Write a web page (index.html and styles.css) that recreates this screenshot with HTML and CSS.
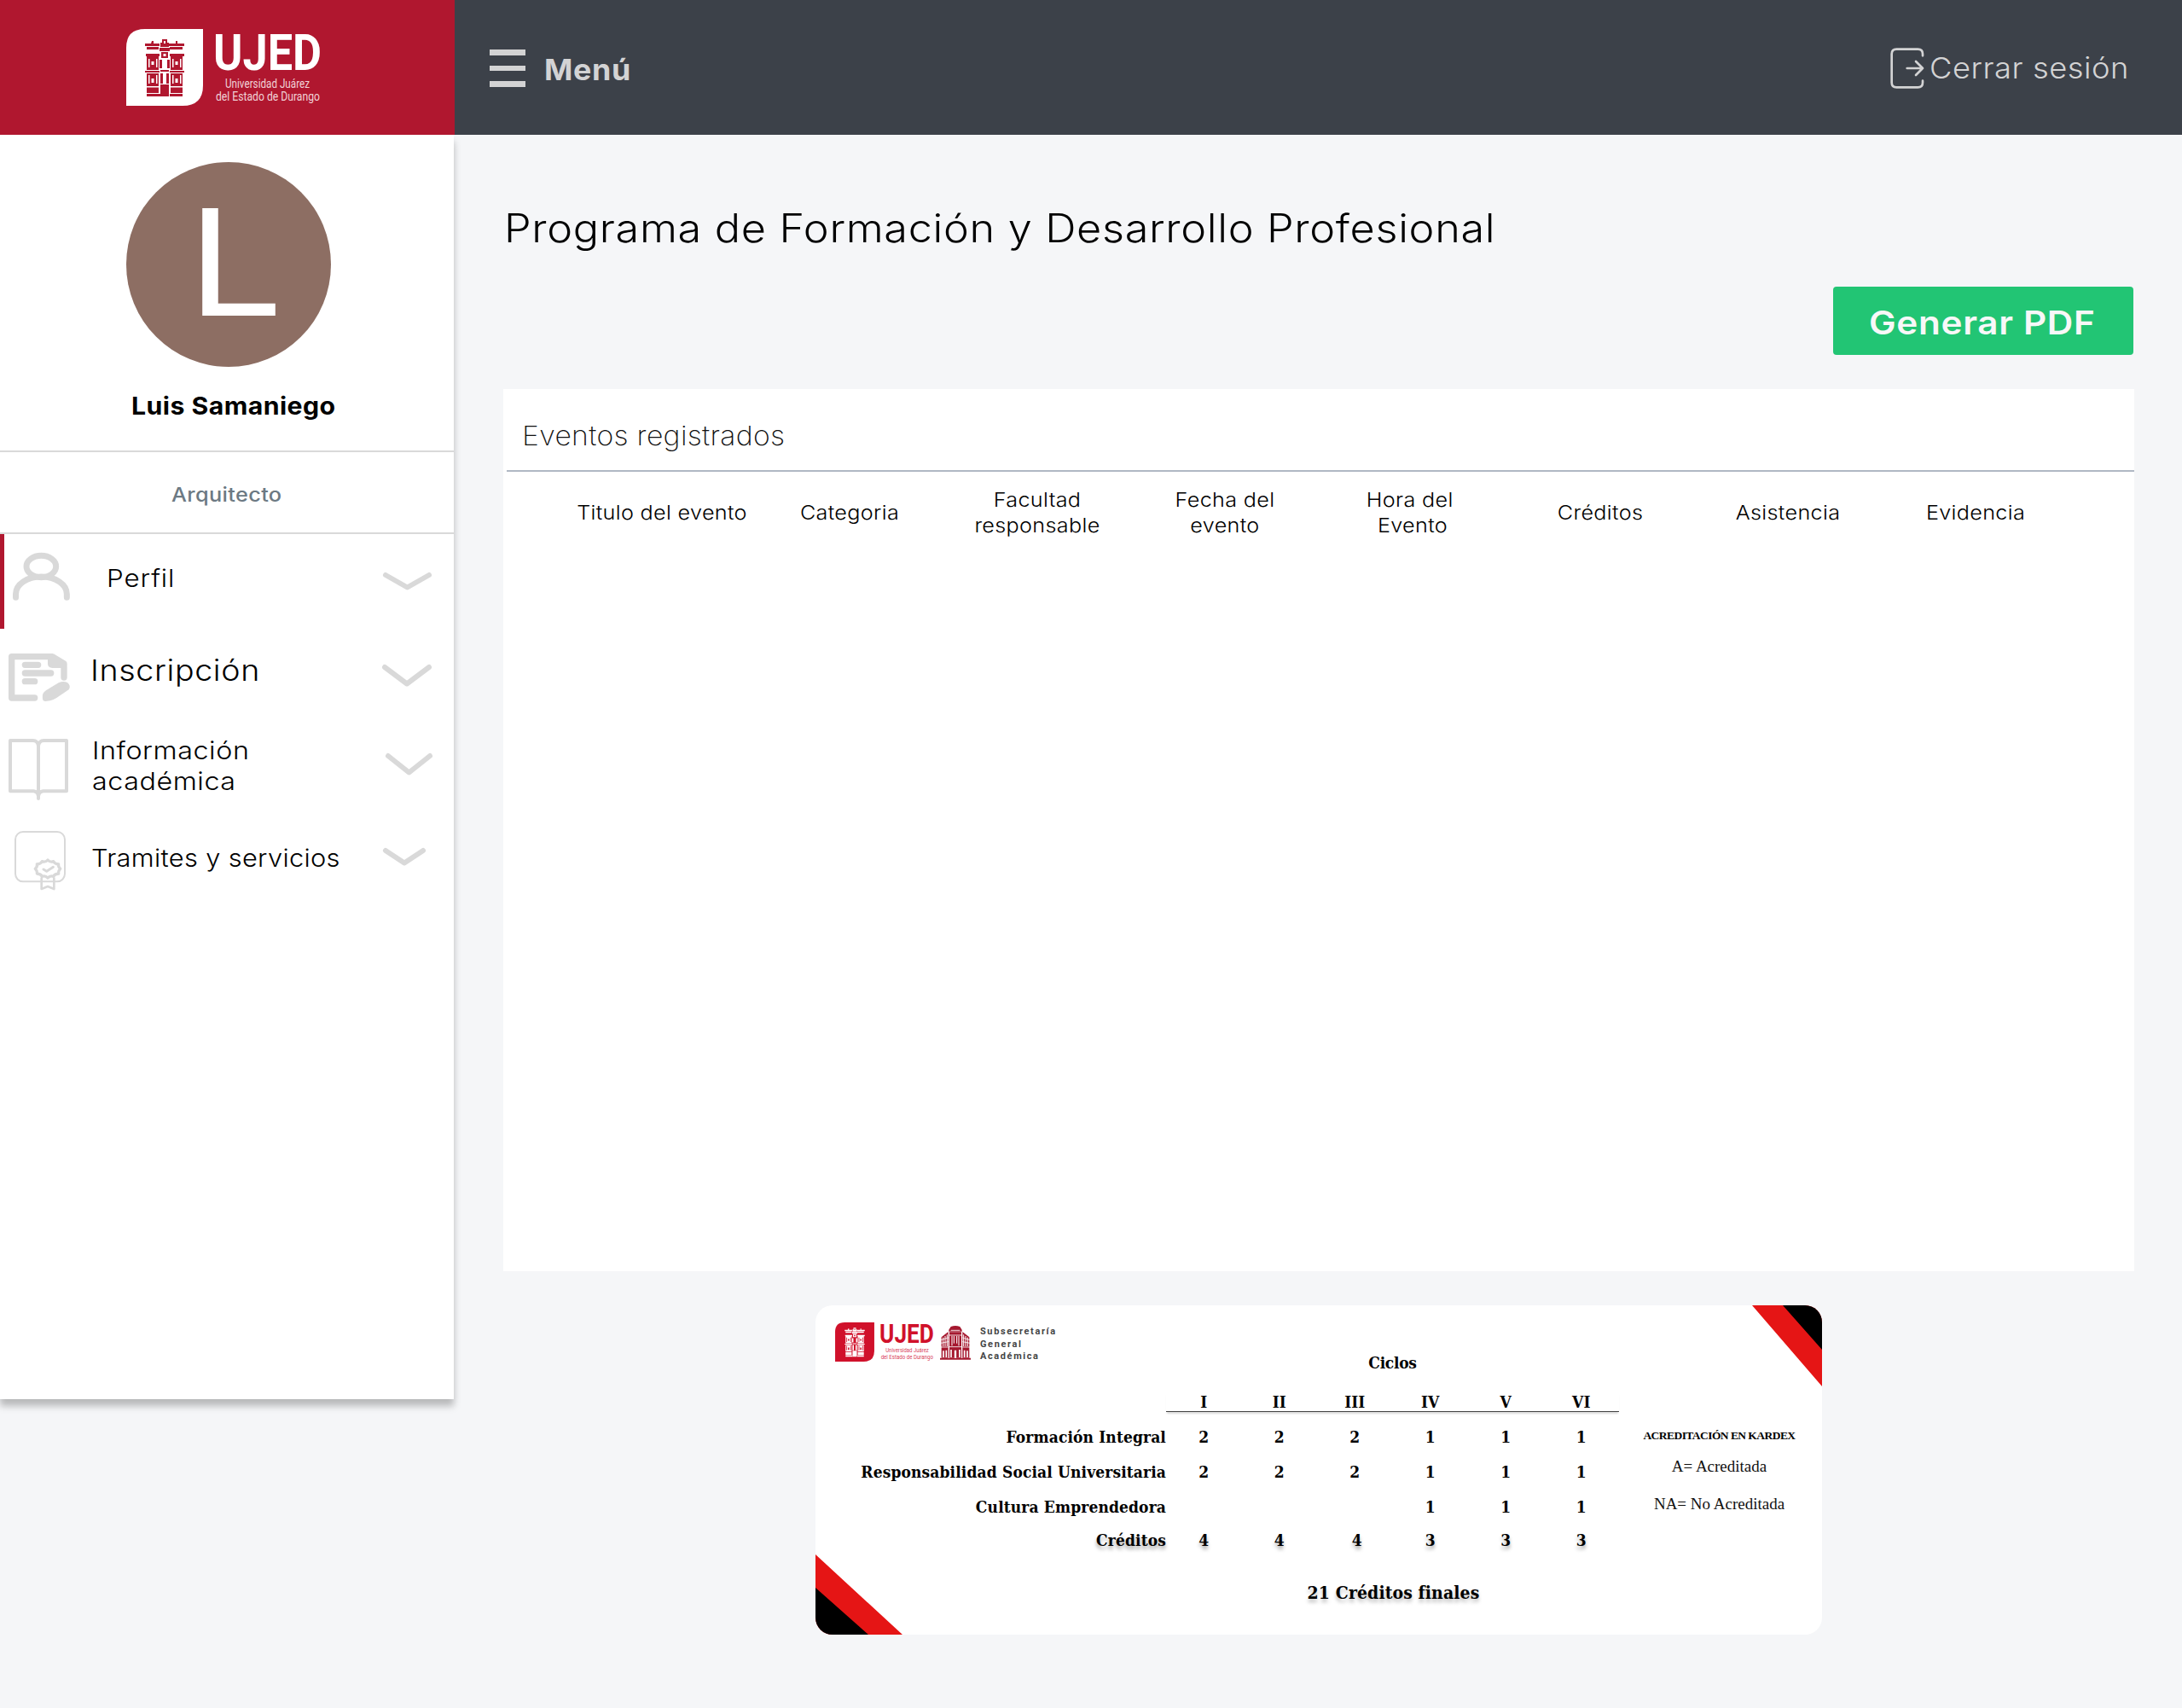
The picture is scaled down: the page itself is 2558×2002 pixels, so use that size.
FILE: index.html
```html
<!DOCTYPE html>
<html lang="es">
<head>
<meta charset="utf-8">
<title>UJED - Programa de Formación y Desarrollo Profesional</title>
<link rel="stylesheet" href="styles.css">
</head>
<body>
<svg class="sprite" aria-hidden="true">
  <symbol id="badge" viewBox="0 0 90 90">
    <path class="logo-badge" d="M22 0H90V66Q90 90 66 90H0V22Q0 0 22 0Z"/>
    <g class="logo-tower">
      <path d="M30 14h2v3h7v3H22v-3h7z M24 21h14v3H24z M23 29h16v3H23z M24 32h14v16H24z M22 49h17v2H22z M24 52h14v23H24z M24 76h16v3H24z"/>
      <path d="M58 14h2v3h8v3H50v-3h8z M51 21h15v3H51z M51 29h17v3H51z M52 32h14v16H52z M51 49h17v2H51z M52 52h14v23H52z M51 76h15v3H51z"/>
      <path d="M42 12h6v4h2v5H40v-5h2z M39 22h12v4H39z M41 27h8v7h-8z M39 36h3v10h-3z M48 36h3v10h-3z M40 48h10v2H40z M40 52h3v12h-3z M47 52h3v12h-3z M40 65h10v14H40z"/>
    </g>
    <path class="logo-badge" d="M26 35h1.500v10h-1.500z M35 35h1.500v10h-1.500z M29.500 38h3v4h-3z M54 35h1.500v10h-1.500z M63 35h1.500v10h-1.500z M57.500 38h3v4h-3z M26 54h1.500v10h-1.500z M35 54h1.500v10h-1.500z M29.500 58h3v5h-3z M54 54h1.500v10h-1.500z M63 54h1.500v10h-1.500z M57.500 58h3v5h-3z M23 67h16v1.500H23z M51 67h16v1.500H51z M44 14h2v3h-2z M43.500 29h3v3h-3z"/>
  </symbol>
</svg>

<header class="topbar">
  <div class="brand">
    <svg class="brand-logo" width="232" height="94" viewBox="0 0 232 94">
      <use href="#badge" width="90" height="90"/>
      <text class="logo-name" x="102" y="48" textLength="127" lengthAdjust="spacingAndGlyphs">UJED</text>
      <text class="logo-sub" x="116" y="68.500" textLength="99" lengthAdjust="spacingAndGlyphs">Universidad Juárez</text>
      <text class="logo-sub" x="105" y="84" textLength="122" lengthAdjust="spacingAndGlyphs">del Estado de Durango</text>
    </svg>
  </div>
  <div class="toolbar">
    <button class="menu-toggle">
      <span class="bars"><i></i><i></i><i></i></span>
      <span class="menu-label">Menú</span>
    </button>
    <a class="logout">
      <svg width="40" height="48" viewBox="0 0 120 144" fill="none" stroke="currentColor" stroke-width="8" stroke-linecap="round" stroke-linejoin="round">
        <path d="M114 28V22Q114 5 97 5H22Q5 5 5 22V122Q5 139 22 139H97Q114 139 114 122V116"/>
        <path d="M59 72H114M90 48L114 72L90 96"/>
      </svg>
      <span class="logout-label">Cerrar sesión</span>
    </a>
  </div>
</header>

<div class="layout">
  <aside class="sidebar">
    <section class="profile">
      <div class="avatar"><span>L</span></div>
      <p class="user-name"><span>Luis Samaniego</span></p>
    </section>
    <p class="user-role"><span>Arquitecto</span></p>
    <nav>
      <a class="nav-item is-active">
        <svg class="nav-icon" width="67" height="56" viewBox="45 55 201 168" fill="none" stroke="currentColor" stroke-width="21" stroke-linecap="round">
          <ellipse cx="145" cy="103" rx="52" ry="38"/>
          <path d="M55.500 212V200C55.500 165 95 139 145 139S235 165 235 200V212"/>
        </svg>
        <span class="nav-label">Perfil</span>
        <svg class="chevron" width="57" height="21" viewBox="0 0 57 21"><path d="M3 3L28.500 17.500L54 3"/></svg>
      </a>
      <a class="nav-item enroll">
        <svg class="nav-icon" width="72" height="56" viewBox="30 48 216 168" fill="currentColor">
          <path fill="none" stroke="currentColor" stroke-width="22" stroke-linecap="round" stroke-linejoin="round" d="M122 204H41V59H184L225 84V132"/>
          <path d="M168 60L184 52L232 82V99H184Q168 98 168 84Z"/>
          <path fill="none" stroke="currentColor" stroke-width="22" stroke-linecap="round" d="M88 88H134M88 117H179M88 146H122"/>
          <path d="M150 208C148 190 152 184 164 176L206 151Q222 143 237 150Q251 162 242 175L200 203Q186 212 176 214L160 216Q151 216 150 208Z"/>
        </svg>
        <span class="nav-label">Inscripción</span>
        <svg class="chevron" width="58" height="26" viewBox="0 0 58 26"><path d="M3 3L29 22.500L55 3"/></svg>
      </a>
      <a class="nav-item academic">
        <svg class="nav-icon" width="70" height="72" viewBox="30 348 210 216" fill="none" stroke="currentColor" stroke-width="12" stroke-linecap="round" stroke-linejoin="round">
          <path d="M135 558V372Q132 354 116 354H36V532H118Q133 534 135 550Q137 534 152 532H234V354H154Q138 354 135 372"/>
        </svg>
        <span class="nav-label">Información<br>académica</span>
        <svg class="chevron" width="55" height="26" viewBox="0 0 55 26"><path d="M3 3L27.500 22.500L52 3"/></svg>
      </a>
      <a class="nav-item services">
        <svg class="nav-icon" width="60" height="70" viewBox="51 671 180 210" fill="none" stroke="currentColor" stroke-linecap="round" stroke-linejoin="round">
          <rect x="54" y="674" width="174" height="175" rx="27" stroke-width="6"/>
          <path stroke-width="8" d="M146 837V875L168 866L190 875V837"/>
          <path stroke-width="10" d="M168 773Q176 782 188 778Q192 787 206 788Q204 797 212 804Q204 812 206 821Q192 822 188 831Q176 827 168 836Q160 827 148 831Q144 822 130 821Q132 812 124 804Q132 797 130 788Q144 787 148 778Q160 782 168 773Z"/>
          <path stroke-width="9" d="M153 806L164 813L187 798"/>
        </svg>
        <span class="nav-label">Tramites y servicios</span>
        <svg class="chevron" width="50" height="21" viewBox="0 0 50 21"><path d="M3 3L25 17.500L47 3"/></svg>
      </a>
    </nav>
  </aside>

  <main class="content">
    <h1>Programa de Formación y Desarrollo Profesional</h1>
    <button class="pdf-button"><span>Generar PDF</span></button>

    <section class="events">
      <h2>Eventos registrados</h2>
      <div class="events-head">
        <span>Titulo del evento</span>
        <span>Categoria</span>
        <span>Facultad<br>responsable</span>
        <span>Fecha del<br>evento</span>
        <span><span class="nudge">Hora del</span><br>Evento</span>
        <span>Créditos</span>
        <span>Asistencia</span>
        <span>Evidencia</span>
      </div>
    </section>

    <section class="credits">
      <svg class="ribbon" width="1180" height="386" viewBox="0 0 1180 386">
        <path fill="#e51515" d="M0 292L102 386H0Z M1098 0H1180V95Z"/>
        <path d="M0 331L62 386H0Z M1134 0H1180V52Z"/>
      </svg>
      <div class="areas">
        <div class="logos">
          <svg class="red-logo" width="118" height="48" viewBox="0 0 231 94">
            <use href="#badge" width="90" height="90"/>
            <text class="logo-name" x="102" y="47" textLength="125" lengthAdjust="spacingAndGlyphs">UJED</text>
            <text class="logo-sub" x="116" y="68.500" textLength="99" lengthAdjust="spacingAndGlyphs">Universidad Juárez</text>
            <text class="logo-sub" x="105" y="84" textLength="120" lengthAdjust="spacingAndGlyphs">del Estado de Durango</text>
          </svg>
          <svg class="building" width="36" height="40" viewBox="0 0 108 120" fill="#a5182f">
            <path d="M38 3Q54-3 70 3L77 14V20H31V14Z M0 113H108V119H0Z"/>
            <path d="M5 40L29 21V113H5Z M103 40L79 21V113H103Z M33 22H75V113H33Z"/>
            <g stroke="#fff" fill="none">
              <path stroke-width="3" d="M11 41V72M18 36V72M25 31V72M97 41V72M90 36V72M83 31V72M42 36V70M66 36V70M49 36V62M59 36V62"/>
              <path stroke-width="2.500" d="M3 50L29 42M3 61L29 56M3 75H29M105 50L79 42M105 61L79 56M105 75H79M33 33H75M33 74H75M38 16H70"/>
              <path stroke-width="5" d="M12 111V88M22 111V86M96 111V88M86 111V86M39 111V84M69 111V84"/>
              <path stroke-width="7" d="M54 113V86"/>
            </g>
          </svg>
          <p class="office">Subsecretaría<br>General<br>Académica</p>
        </div>
        <ul class="area-list">
          <li>Formación Integral</li>
          <li>Responsabilidad Social Universitaria</li>
          <li>Cultura Emprendedora</li>
          <li class="total">Créditos</li>
        </ul>
      </div>
      <div class="cycles">
        <p class="cycles-title">Ciclos</p>
        <div class="cycle-row cycle-head"><span>I</span><span>II</span><span>III</span><span>IV</span><span>V</span><span>VI</span></div>
        <div class="cycle-row"><span>2</span><span>2</span><span>2</span><span>1</span><span>1</span><span>1</span></div>
        <div class="cycle-row"><span>2</span><span>2</span><span>2</span><span>1</span><span>1</span><span>1</span></div>
        <div class="cycle-row"><span></span><span></span><span></span><span>1</span><span>1</span><span>1</span></div>
        <div class="cycle-row total"><span>4</span><span>4</span><span class="shifted">4</span><span>3</span><span>3</span><span>3</span></div>
        <p class="grand-total">21 Créditos finales</p>
      </div>
      <div class="legend">
        <p class="legend-title">ACREDITACIÓN EN KARDEX</p>
        <p>A= Acreditada</p>
        <p class="legend-na">NA= No Acreditada</p>
      </div>
    </section>
  </main>
</div>
</body>
</html>
```
FILE: styles.css
```css
* { box-sizing: border-box; }

body {
  margin: 0;
  min-height: 2002px;
  background: #f5f6f8;
  color: #000;
  font-family: Inter, "Liberation Sans", sans-serif;
}

h1, h2, p, ul { margin: 0; padding: 0; }
ul { list-style: none; }
button { border: 0; background: none; padding: 0; font-family: inherit; }
svg { display: block; flex: none; overflow: visible; }
.sprite { position: absolute; width: 0; height: 0; }

/* Logo */
.brand-logo { --badge: #fff; --tower: #b0172f; --name: #fff; --sub: #f0d3d8; }
.red-logo { --badge: #d0112b; --tower: #fff; --name: #d0112b; --sub: #d9415a; }
.logo-badge { fill: var(--badge); }
.logo-tower { fill: var(--tower); }
.logo-name { fill: var(--name); font: 700 60px Roboto, sans-serif; }
.logo-sub { fill: var(--sub); font: 400 14px Roboto, sans-serif; }

/* Top bar */
.topbar { display: grid; grid-template-columns: 533px 1fr; height: 158px; }
.brand { background: #b0172f; padding: 34px 0 0 148px; }
.toolbar { display: flex; align-items: center; background: #3c4149; color: #d3d3d4; padding: 2px 0 0 41px; }
.menu-toggle { display: flex; align-items: center; gap: 22px; color: inherit; }
.bars { display: flex; flex-direction: column; gap: 12px; width: 42px; }
.bars i { height: 6.67px; background: currentColor; }
.menu-label { font-size: 34px; font-weight: 700; line-height: 40px; letter-spacing: .6px; padding-top: 4px; transform: scaleX(1.055); transform-origin: left; }
.logout { display: flex; align-items: center; gap: 6px; width: 342px; margin-left: auto; font-size: 34px; font-weight: 300; line-height: 48px; letter-spacing: .5px; }
.logout-label { transform: scaleX(1.068); transform-origin: left; }

.layout { display: grid; grid-template-columns: 532px 1fr; align-items: start; }

/* Sidebar */
.sidebar { height: 1482px; background: #fff; box-shadow: 0 8px 8px rgba(0, 0, 0, .25); clip-path: inset(0 -20px -30px 0); }
.profile { height: 372px; padding-top: 32px; border-bottom: 2px solid #d9d9d9; }
.avatar {
  display: flex; align-items: center; justify-content: center;
  width: 240px; height: 240px; margin-left: 148px; padding: 0 0 6px 15px;
  border-radius: 50%; background: #8d6e63; color: #fff; font-size: 173px; line-height: 1;
}
.avatar span { transform: scaleX(1.15); }
.user-name { margin-top: 26px; padding-left: 15px; text-align: center; font-size: 28.5px; font-weight: 700; line-height: 40px; letter-spacing: .4px; }
.user-name span { display: inline-block; transform: scaleX(1.062); }
.user-role { height: 96px; border-bottom: 2px solid #d9d9d9; padding-top: 6px; text-align: center; color: #6c7983; font-size: 23px; font-weight: 500; line-height: 89px; letter-spacing: .3px; }
.user-role span { display: inline-block; transform: scaleX(1.102); }

.nav-item { display: grid; grid-template-columns: 106px 1fr auto; align-items: start; height: 108px; }
.nav-icon { margin-left: 10px; color: #d9d9d9; }
.nav-label { font-size: 28px; font-weight: 300; line-height: 36px; white-space: nowrap; transform-origin: left; }
.chevron { fill: none; stroke: #d9d9d9; stroke-width: 6px; stroke-linecap: round; stroke-linejoin: round; margin-right: 26px; }

.is-active { grid-template-columns: 101px 1fr auto; height: 111px; border-left: 5px solid #b0172f; }
.is-active .nav-icon { margin-top: 22px; }
.is-active .nav-label { margin: 34px 0 0 19px; letter-spacing: .8px; transform: scaleX(1.12); }
.is-active .chevron { margin-top: 45px; }
.enroll .nav-icon { margin-top: 29px; }
.enroll .nav-label { margin-top: 29px; font-size: 34.5px; line-height: 40px; letter-spacing: .6px; transform: scaleX(1.089); }
.enroll .chevron { margin-top: 42px; }
.academic { height: 110px; }
.academic .nav-icon { margin-top: 21px; }
.academic .nav-label { margin: 17px 0 0 1.5px; font-size: 29px; letter-spacing: .5px; transform: scaleX(1.112); }
.academic .chevron { margin-top: 38px; margin-right: 25px; }
.services .nav-icon { margin: 19px 0 0 17px; }
.services .nav-label { margin: 33px 0 0 1px; letter-spacing: .3px; transform: scaleX(1.1); }
.services .chevron { margin: 39px 33px 0 0; }

/* Main column */
.content { padding: 79px 56px 0 58px; }
h1 { margin-left: 1px; font-size: 46px; font-weight: 300; line-height: 60px; letter-spacing: .6px; white-space: nowrap; transform: scaleX(1.096); transform-origin: left; }
.pdf-button {
  display: block; width: 352px; height: 80px; margin: 39px 1px 0 auto; padding-left: 42px;
  border-radius: 4px; background: #22c574; color: #f8f8f8; text-align: left; white-space: nowrap;
  font-size: 38.5px; font-weight: 600; line-height: 84px; letter-spacing: .6px;
}
.pdf-button span { display: inline-block; transform: scaleX(1.098); transform-origin: left; }

.events { height: 1034px; margin-top: 40px; background: #fff; }
.events h2 { height: 95px; padding: 14px 0 0 22px; font-size: 31.5px; font-weight: 200; line-height: 81px; letter-spacing: .3px; color: #111; transform: scaleX(1.07); transform-origin: 22px 0; }
.events-head {
  display: grid; grid-template-columns: repeat(8, 220px); align-items: center;
  margin-left: 4px; padding: 18px 0 0 72px; border-top: 2px solid #b0b8c4;
  text-align: center; font-size: 23px; font-weight: 300; line-height: 30px; letter-spacing: .3px;
}
.events-head > span { transform: scaleX(1.095); }
.nudge { margin-right: 6px; }

/* Credits card */
.credits {
  position: relative; display: grid; grid-template-columns: 411px 531px 238px;
  width: 1180px; height: 386px; margin: 40px 0 0 366px; overflow: hidden;
  border-radius: 20px; background: #fff;
  font: 700 19px/40px "DejaVu Serif Condensed", "DejaVu Serif", serif;
}
.ribbon { position: absolute; inset: 0; }
.logos { display: flex; height: 46px; margin: 20px 0 68px 23px; }
.building { margin: 4px 0 0 5px; }
.office { margin: 4px 0 0 11px; color: #444; font: 700 11px/14.6px Roboto, sans-serif; letter-spacing: 1.6px; }
.area-list { text-align: right; letter-spacing: .13px; white-space: nowrap; }
.area-list li { height: 41px; line-height: 41px; }
.area-list .total, .cycle-row.total { line-height: 37px; text-shadow: 0 4px 4px rgba(0, 0, 0, .35); }
.cycles { padding-top: 52px; text-align: center; }
.cycles-title { line-height: 30px; letter-spacing: -.28px; }
.cycle-row { display: grid; grid-template-columns: repeat(6, 1fr); height: 41px; line-height: 41px; }
.cycle-head { height: 23px; margin: 20px 0 9px; line-height: 22px; border-bottom: 1px solid #444; box-shadow: 0 3px 2px -1px rgba(0, 0, 0, .15); }
.shifted { padding-left: 5px; }
.grand-total { margin-top: 19px; padding-left: 2px; font-size: 21px; letter-spacing: .1px; text-shadow: 0 4px 4px rgba(0, 0, 0, .25); white-space: nowrap; }
.legend { padding: 138px 3px 0 0; text-align: center; font: 400 19px/30px "Liberation Serif", serif; color: #111; }
.legend-title { margin-bottom: 6px; font-size: 13.5px; font-weight: 700; letter-spacing: -.55px; color: #000; }
.legend-na { margin-top: 14px; }
```
